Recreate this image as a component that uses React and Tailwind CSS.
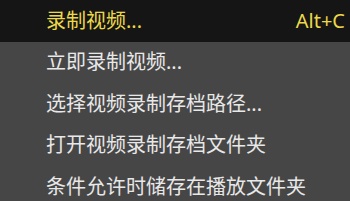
const ITEMS = [
  { label: "录制视频...", key: "Alt+C", active: true },
  { label: "立即录制视频..." },
  { label: "选择视频录制存档路径..." },
  { label: "打开视频录制存档文件夹" },
  { label: "条件允许时储存在播放文件夹" },
];

export default function App() {
  return (
    <div
      className="w-[350px] h-[201px] overflow-hidden bg-[#464646] text-[20px] leading-none"
      style={{ fontFamily: '"Noto Sans", "Noto Sans CJK SC", sans-serif' }}
    >
      {ITEMS.map((it, i) => (
        <div
          key={i}
          className={`h-[41.5px] flex items-center pl-[46px] pr-[5px] ${
            it.active ? "bg-[#151515] text-[#ecd94a]" : "text-[#e8e8e8]"
          }`}
        >
          <span className="flex-1 whitespace-nowrap">{it.label}</span>
          {it.key && <span className="whitespace-nowrap">{it.key}</span>}
        </div>
      ))}
    </div>
  );
}
